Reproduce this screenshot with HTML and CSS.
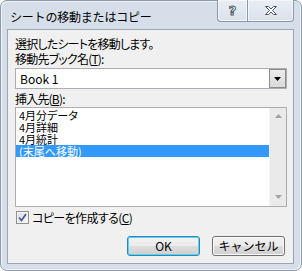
FILE: index.html
```html
<!DOCTYPE html>
<html lang="ja">
<head>
    <meta charset="UTF-8">
    <title>シートの移動またはコピー</title>
    <link rel="stylesheet" href="styles.css">
</head>
<body>

<div class="window">
    <div class="titlebar">
        <span class="title">シートの移動またはコピー</span>
        <div class="caption">
            <div class="cap-btn help">?</div>
            <div class="cap-btn close">
                <svg width="14" height="11" viewBox="0 0 14 11">
                    <path d="M1.5 1.5h3l2.5 2.5 2.5-2.5h3l-4 4 4 4h-3l-2.5-2.5-2.5 2.5h-3l4-4z" fill="#fff" stroke="#4d5560" stroke-width="1" stroke-linejoin="round"/>
                </svg>
            </div>
        </div>
    </div>

    <div class="client">
        <div class="line">選択したシートを移動します。</div>
        <div class="line">移動先ブック名(<u>T</u>):</div>

        <div class="combo">
            <span class="combo-text">Book 1</span>
            <div class="combo-btn">
                <svg width="7" height="4" viewBox="0 0 7 4"><path d="M0 0h7L3.5 4z" fill="#000"/></svg>
            </div>
        </div>

        <div class="line gap">挿入先(<u>B</u>):</div>

        <div class="listbox">
            <ul class="items">
                <li>4月分データ</li>
                <li>4月詳細</li>
                <li>4月統計</li>
                <li class="selected">(末尾へ移動)</li>
            </ul>
            <div class="scrollbar">
                <svg width="7" height="4" viewBox="0 0 7 4"><path d="M0 4h7L3.5 0z" fill="#a3a3a3"/></svg>
                <svg width="7" height="4" viewBox="0 0 7 4"><path d="M0 0h7L3.5 4z" fill="#a3a3a3"/></svg>
            </div>
        </div>

        <label class="check">
            <span class="box">
                <svg width="9" height="9" viewBox="0 0 9 9"><path d="M1 4.5l2.5 3L8 1" fill="none" stroke="#4a5e94" stroke-width="1.8"/></svg>
            </span>
            <span class="check-text">コピーを作成する(<u>C</u>)</span>
        </label>

        <div class="buttons">
            <button class="btn default">OK</button>
            <button class="btn">キャンセル</button>
        </div>
    </div>
</div>

</body>
</html>
```

FILE: styles.css
```css
* {
    box-sizing: border-box;
}
body {
    margin: 0;
    background: #fff;
    font-family: "Noto Sans CJK JP", "Noto Sans", sans-serif;
    font-size: 12px;
    color: #000;
}
.window {
    width: 302px;
    height: 271px;
    display: flex;
    flex-direction: column;
    padding: 0 7px 6px 6px;
    background: #d5dee9;
    border: 1px solid #8e9aa9;
    border-radius: 7px;
    box-shadow: inset 1px 1px 0 #eef3f8, inset -1px -1px 0 #eef3f8;
}
.titlebar {
    height: 28px;
    display: flex;
    justify-content: space-between;
    align-items: flex-start;
}
.title {
    margin: 8px 0 0 3px;
    line-height: 16px;
    font-size: 12px;
    letter-spacing: -0.2px;
}
.caption {
    display: flex;
    margin-top: -1px;
}
.cap-btn {
    height: 22px;
    display: flex;
    align-items: center;
    justify-content: center;
    border: 1px solid #8c98a8;
    border-top: none;
    background: linear-gradient(#e9eef4, #d9e2ec);
    box-shadow: inset 0 0 0 1px #f3f6fa;
}
.help {
    width: 30px;
    border-radius: 0 0 0 4px;
    border-right: none;
    font-family: "DejaVu Sans", sans-serif;
    font-weight: bold;
    font-size: 13px;
    color: #fff;
    -webkit-text-stroke: 1px #4d5560;
}
.close {
    width: 47px;
    border-radius: 0 0 4px 0;
}
.client {
    flex: 1;
    background: #f0f0f0;
    border: 1px solid #9aa6b5;
    padding: 6px 6px 0 7px;
    display: flex;
    flex-direction: column;
}
.line {
    line-height: 15px;
    height: 15px;
    font-feature-settings: "palt";
    letter-spacing: -0.8px;
    white-space: nowrap;
}
.line.gap {
    margin-top: 2px;
}
.combo {
    margin-top: 2px;
    height: 21px;
    display: flex;
    align-items: center;
    justify-content: space-between;
    background: #fff;
    border: 1px solid #abadb3;
    padding: 0 0 0 4px;
}
.combo-text {
    font-size: 12px;
}
.combo-btn {
    width: 17px;
    height: 19px;
    display: flex;
    align-items: center;
    justify-content: center;
    background: linear-gradient(#ececec, #d9d9d9);
    border: 1px solid #8c8c8c;
}
.listbox {
    margin-top: 1px;
    height: 100px;
    display: flex;
    background: #fff;
    border: 1px solid #abadb3;
}
.items {
    flex: 1;
    list-style: none;
    margin: 0;
    padding: 1px 0 0 0;
    font-size: 11px;
    font-feature-settings: "palt";
}
.items li {
    height: 12px;
    line-height: 12px;
    padding-left: 3px;
    white-space: nowrap;
}
.items li.selected {
    background: #3399ff;
    color: #fff;
}
.scrollbar {
    width: 17px;
    display: flex;
    flex-direction: column;
    justify-content: space-between;
    align-items: center;
    padding: 6px 0 7px;
    background: #eaeaea;
    border-left: 1px solid #f4f4f4;
}
.check {
    margin-top: 4px;
    height: 13px;
    display: flex;
    align-items: center;
    gap: 3px;
    padding-left: 1px;
    line-height: 13px;
}
.check-text {
    font-feature-settings: "palt";
    letter-spacing: -0.6px;
    white-space: nowrap;
}
.box {
    width: 13px;
    height: 13px;
    display: flex;
    align-items: center;
    justify-content: center;
    border: 1px solid #8f8f8f;
    background: linear-gradient(135deg, #dcdcdc, #fbfbfb);
    box-shadow: inset 0 0 0 1px #f4f4f4;
}
.buttons {
    margin-top: 12px;
    display: flex;
    justify-content: flex-end;
    gap: 12px;
    padding-right: 2px;
}
.btn {
    width: 73px;
    height: 20px;
    padding: 0;
    font-family: "Noto Sans CJK JP", "Noto Sans", sans-serif;
    font-size: 12px;
    line-height: 16px;
    color: #000;
    border: 1px solid #707070;
    border-radius: 3px;
    background: linear-gradient(#f2f2f2 0%, #ebebeb 50%, #dddddd 51%, #cfcfcf 100%);
    box-shadow: inset 0 0 0 1px #fcfcfc;
}
.btn.default {
    border-color: #3c7fb1;
    box-shadow: inset 0 0 0 1px #48d8fb;
}
```
